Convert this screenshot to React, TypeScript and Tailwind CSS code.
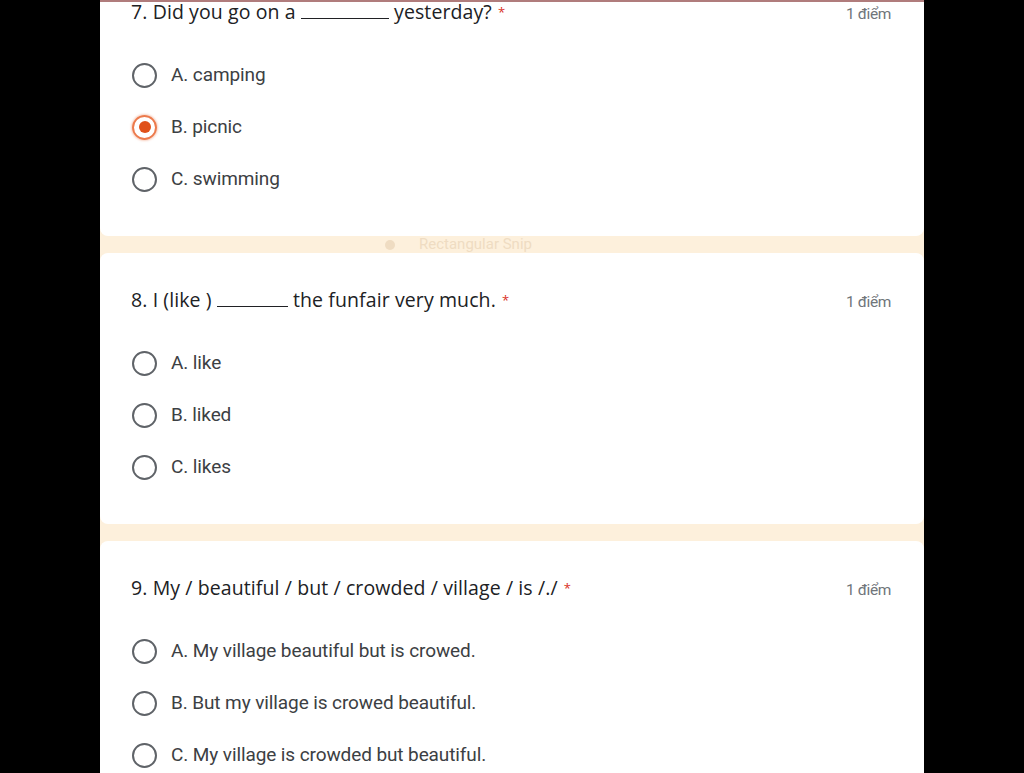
import React from "react";

type Q = { q: React.ReactNode; options: string[]; selected?: number };

const questions: Q[] = [
  {
    q: (
      <>
        7. Did you go on a <span className="inline-block w-[88px] h-[14px] border-b-[1.5px] border-[#202124] align-baseline" /> yesterday?
      </>
    ),
    options: ["A. camping", "B. picnic", "C. swimming"],
    selected: 1,
  },
  {
    q: (
      <>
        8. I (like ) <span className="inline-block w-[71px] h-[14px] border-b-[1.5px] border-[#202124] align-baseline" /> the funfair very much.
      </>
    ),
    options: ["A. like", "B. liked", "C. likes"],
  },
  {
    q: <>9. My / beautiful / but / crowded / village / is /./</>,
    options: [
      "A. My village beautiful but is crowed.",
      "B. But my village is crowed beautiful.",
      "C. My village is crowded but beautiful.",
    ],
  },
];

function Radio({ checked }: { checked?: boolean }) {
  if (checked) {
    return (
      <div className="w-[25px] h-[25px] rounded-full border-[2.5px] border-[#ec7a4c] flex items-center justify-center shrink-0 shadow-[0_0_2px_1px_rgba(236,122,76,0.35)]">
        <div className="w-[12px] h-[12px] rounded-full bg-[#e0511a]" />
      </div>
    );
  }
  return <div className="w-[25px] h-[25px] rounded-full border-[2.5px] border-[#5f6368] shrink-0" />;
}

function Card({ item }: { item: Q }) {
  return (
    <div className="bg-white rounded-[8px] pl-[31px] pr-[33px] pt-[35px] pb-[31px]">
      <div className="flex items-baseline justify-between h-[24px]">
        <div
          className="text-[19.5px] leading-[24px] text-[#202124] tracking-[0.1px]"
          style={{ fontFamily: "'Open Sans', Roboto, sans-serif" }}
        >
          {item.q}
          <span className="text-[#d93025] text-[13px] align-top ml-[6px]">*</span>
        </div>
        <div className="text-[15.5px] text-[#70757a] tracking-[-0.4px]">1 điểm</div>
      </div>
      <div className="mt-[25px] flex flex-col">
        {item.options.map((o, i) => (
          <div key={i} className="h-[52px] flex items-center">
            <div className="ml-[1px]">
              <Radio checked={item.selected === i} />
            </div>
            <span className="ml-[14px] text-[19px] text-[#3c4043] tracking-[-0.1px]">{o}</span>
          </div>
        ))}
      </div>
    </div>
  );
}

export default function App() {
  return (
    <div
      className="w-[1024px] h-[773px] bg-black overflow-hidden flex justify-center relative"
      style={{ fontFamily: "Roboto, 'Liberation Sans', Arial, sans-serif" }}
    >
      <div className="w-[824px] bg-[#fdf0dc] flex flex-col gap-[17px] -mt-[35px] self-start">
        <Card item={questions[0]} />
        <Card item={questions[1]} />
        <Card item={questions[2]} />
      </div>
      <div className="absolute top-0 left-[100px] w-[824px] h-[2px] bg-[#b07c7c]" />
      <div className="absolute top-[236px] left-[385px] h-[17px] flex items-center gap-[24px] text-[#efdcc2] text-[15px]">
        <div className="w-[10px] h-[10px] rounded-full bg-[#efdcc2]" />
        <span>Rectangular Snip</span>
      </div>
    </div>
  );
}
